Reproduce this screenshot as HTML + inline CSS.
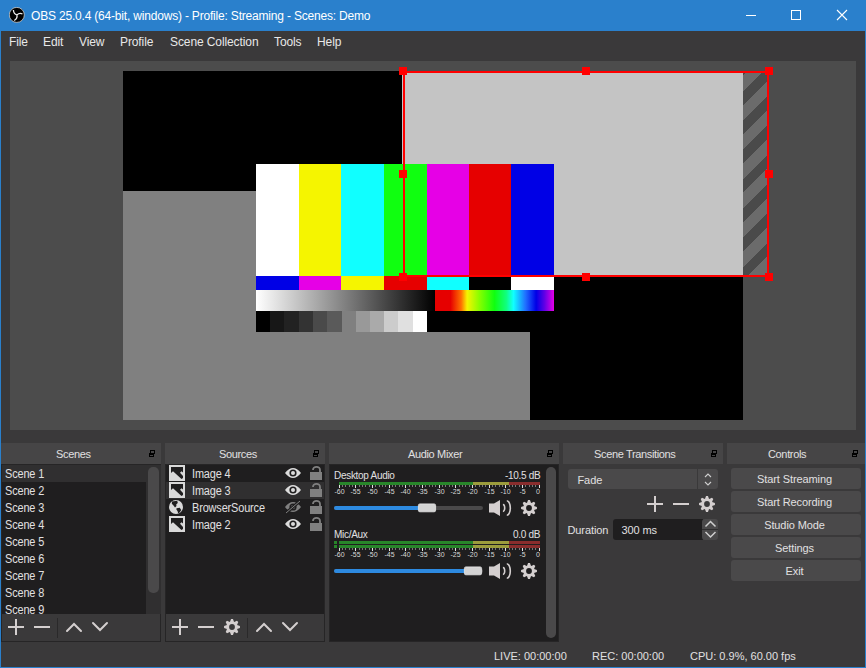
<!DOCTYPE html><html><head><meta charset="utf-8"><style>
*{margin:0;padding:0;box-sizing:border-box}
html,body{width:866px;height:668px;overflow:hidden}
body{background:#3a393a;font-family:"Liberation Sans",sans-serif;color:#e1e0e1;position:relative}
.a{position:absolute}
.t{position:absolute;white-space:nowrap;line-height:1}
.menu{font-size:12px;letter-spacing:-0.1px;color:#e8e8e8}
.dt{top:443px;height:21px;background:#464546}
.dtt{top:449px;font-size:11px;letter-spacing:-0.35px}
.lst{background:#1f1e1f}
.it{font-size:12px;letter-spacing:-0.15px;transform:scaleX(0.91);transform-origin:0 0}
.am{font-size:10px;letter-spacing:-0.3px}
.bt{font-size:11px;letter-spacing:-0.1px}
.btn{position:absolute;left:731px;width:130px;height:21px;background:#4a494a;border-radius:3px;font-size:11px;letter-spacing:-0.1px;text-align:center;line-height:21px;padding-right:3px;padding-top:1px}
.sl{font-size:11px;letter-spacing:0px;top:652px}
</style></head><body>
<div class="a" style="left:0px;top:0px;width:866px;height:31px;background:#2a80cc;"></div>
<div class="a" style="left:0px;top:0px;width:1px;height:668px;background:#2a80cc;"></div>
<div class="a" style="left:865px;top:0px;width:1px;height:668px;background:#2a80cc;"></div>
<div class="a" style="left:0px;top:667px;width:866px;height:1px;background:#2a80cc;"></div>
<div class="t " style="left:31px;top:10px;font-size:12px;letter-spacing:-0.19px;color:#fff">OBS 25.0.4 (64-bit, windows) - Profile: Streaming - Scenes: Demo</div>
<svg class="a" style="left:9px;top:7px" width="16" height="16" viewBox="0 0 16 16">
<circle cx="7.8" cy="7.9" r="7.5" fill="#000" stroke="#e8e0d8" stroke-width="0.7"/>
<path d="M7.9,7.9 Q4.8,7.2 4.4,3 M7.9,7.9 Q10.5,5.5 13.5,7 M7.9,7.9 Q8.8,11.5 5.2,13.5" stroke="#eee" stroke-width="1.3" fill="none"/>
</svg>
<div class="a" style="left:746px;top:15px;width:10px;height:1px;background:#fff;"></div>
<div class="a" style="left:791px;top:10px;width:10px;height:10px;background:transparent;border:1px solid #fff"></div>
<svg class="a" style="left:836px;top:9px" width="12" height="12" viewBox="0 0 12 12"><path d="M1 1L11 11M11 1L1 11" stroke="#fff" stroke-width="1.1"/></svg>
<div class="t menu" style="left:9px;top:36px;">File</div>
<div class="t menu" style="left:43px;top:36px;">Edit</div>
<div class="t menu" style="left:79px;top:36px;">View</div>
<div class="t menu" style="left:120px;top:36px;">Profile</div>
<div class="t menu" style="left:170px;top:36px;">Scene Collection</div>
<div class="t menu" style="left:274px;top:36px;">Tools</div>
<div class="t menu" style="left:317px;top:36px;">Help</div>
<div class="a" style="left:10px;top:61px;width:846px;height:369px;background:#4c4c4c;"></div>
<div class="a" style="left:123px;top:71px;width:620px;height:349px;background:#000;"></div>
<div class="a" style="left:123px;top:191px;width:407px;height:229px;background:#808080;"></div>
<div class="a" style="left:402px;top:71px;width:341px;height:205px;background:#c4c4c4;"></div>
<div class="a" style="left:743px;top:73px;width:24px;height:202px;background:repeating-linear-gradient(135deg,#4a4a4a 0 2px,#6b6b6b 2px 13px,#4a4a4a 13px 20.7px);"></div>
<div class="a" style="left:256px;top:164px;width:298px;height:168px;background:#000;"></div>
<div class="a" style="left:256px;top:164px;width:298px;height:112px;background:linear-gradient(90deg,#fff 0px 43px,#f5f500 43px 85px,#10ffff 85px 128px,#10ff10 128px 171px,#e600e6 171px 213px,#e60000 213px 255px,#0000e6 255px 298px);"></div>
<div class="a" style="left:256px;top:276px;width:298px;height:14px;background:linear-gradient(90deg,#0000e6 0px 43px,#e600e6 43px 85px,#f5f500 85px 128px,#e60000 128px 171px,#10ffff 171px 213px,#000 213px 255px,#fff 255px 298px);"></div>
<div class="a" style="left:256px;top:290px;width:179px;height:21px;background:linear-gradient(90deg,#fff,#000);"></div>
<div class="a" style="left:435px;top:290px;width:119px;height:21px;background:linear-gradient(90deg,#e60000 0%,#e60000 13%,#ff7000 22%,#f5f500 27%,#80ff00 38%,#10ff10 50%,#10ff80 60%,#10ffff 66%,#2070ff 76%,#0000e6 85%,#6000e6 92%,#e600e6 100%);"></div>
<div class="a" style="left:256px;top:311px;width:171px;height:21px;background:linear-gradient(90deg,#000 0px 14px,#171717 14px 28px,#222 28px 43px,#333 43px 57px,#4a4a4a 57px 71px,#5a5a5a 71px 86px,#808080 86px 100px,#999 100px 114px,#aaa 114px 128px,#ccc 128px 142px,#e0e0e0 142px 157px,#fff 157px 171px);"></div>
<div class="a" style="left:403px;top:71px;width:366px;height:2px;background:#f00;"></div>
<div class="a" style="left:403px;top:275px;width:366px;height:2px;background:#f00;"></div>
<div class="a" style="left:403px;top:71px;width:2px;height:206px;background:#f00;"></div>
<div class="a" style="left:767px;top:71px;width:2px;height:206px;background:#f00;"></div>
<div class="a" style="left:399px;top:67px;width:8px;height:8px;background:#f00;"></div>
<div class="a" style="left:399px;top:170px;width:8px;height:8px;background:#f00;"></div>
<div class="a" style="left:399px;top:273px;width:8px;height:8px;background:#f00;"></div>
<div class="a" style="left:582px;top:67px;width:8px;height:8px;background:#f00;"></div>
<div class="a" style="left:582px;top:273px;width:8px;height:8px;background:#f00;"></div>
<div class="a" style="left:765px;top:67px;width:8px;height:8px;background:#f00;"></div>
<div class="a" style="left:765px;top:170px;width:8px;height:8px;background:#f00;"></div>
<div class="a" style="left:765px;top:273px;width:8px;height:8px;background:#f00;"></div>
<div class="a dt" style="left:1px;width:160px"></div>
<div class="a dt" style="left:165px;width:160px"></div>
<div class="a dt" style="left:329px;width:230px"></div>
<div class="a dt" style="left:563px;width:160px"></div>
<div class="a dt" style="left:727px;width:138px"></div>
<div class="t dtt" style="left:56px;top:449px;">Scenes</div>
<div class="t dtt" style="left:219px;top:449px;">Sources</div>
<div class="t dtt" style="left:408px;top:449px;">Audio Mixer</div>
<div class="t dtt" style="left:594px;top:449px;">Scene Transitions</div>
<div class="t dtt" style="left:768px;top:449px;">Controls</div>
<div class="a" style="left:1px;top:464px;width:160px;height:178px;background:#262526;"></div>
<div class="a" style="left:2px;top:465px;width:144px;height:149px;background:#1f1e1f;"></div>
<div class="a" style="left:2px;top:465px;width:144px;height:17px;background:#302f30;"></div>
<div class="t it" style="left:5px;top:468px;">Scene 1</div>
<div class="t it" style="left:5px;top:485px;">Scene 2</div>
<div class="t it" style="left:5px;top:502px;">Scene 3</div>
<div class="t it" style="left:5px;top:519px;">Scene 4</div>
<div class="t it" style="left:5px;top:536px;">Scene 5</div>
<div class="t it" style="left:5px;top:553px;">Scene 6</div>
<div class="t it" style="left:5px;top:570px;">Scene 7</div>
<div class="t it" style="left:5px;top:587px;">Scene 8</div>
<div class="t it" style="left:5px;top:604px;">Scene 9</div>
<div class="a" style="left:146px;top:465px;width:15px;height:149px;background:#302f30;"></div>
<div class="a" style="left:148px;top:467px;width:11px;height:126px;background:#4a494a;border-radius:5px"></div>
<div class="a" style="left:2px;top:614px;width:158px;height:27px;background:#3a393a;"></div>
<div class="a" style="left:57px;top:618px;width:1px;height:20px;background:#2a292a;"></div>
<div class="a" style="left:165px;top:464px;width:160px;height:178px;background:#262526;"></div>
<div class="a" style="left:166px;top:465px;width:158px;height:149px;background:#1f1e1f;"></div>
<div class="a" style="left:166px;top:482px;width:158px;height:17px;background:#302f30;"></div>
<div class="a" style="left:166px;top:614px;width:158px;height:27px;background:#3a393a;"></div>
<div class="a" style="left:247px;top:618px;width:1px;height:20px;background:#2a292a;"></div>
<div class="t it" style="left:192px;top:468px;">Image 4</div>
<div class="t it" style="left:192px;top:485px;">Image 3</div>
<div class="t it" style="left:192px;top:502px;">BrowserSource</div>
<div class="t it" style="left:192px;top:519px;">Image 2</div>
<div class="a" style="left:329px;top:464px;width:230px;height:178px;background:#262526;"></div>
<div class="a" style="left:330px;top:465px;width:228px;height:176px;background:#1f1e1f;"></div>
<div class="a" style="left:546px;top:467px;width:10px;height:171px;background:#4a494a;border-radius:5px"></div>
<div class="t am" style="left:334px;top:471px;">Desktop Audio</div>
<div class="t am" style="left:505px;top:471px;">-10.5 dB</div>
<div class="t am" style="left:334px;top:530px;">Mic/Aux</div>
<div class="t am" style="left:513px;top:530px;">0.0 dB</div>
<div class="a" style="left:568px;top:469px;width:150px;height:20px;background:#4a494a;border-radius:3px"></div>
<div class="a" style="left:697px;top:469px;width:1px;height:20px;background:#3a393a;"></div>
<div class="t bt" style="left:577.5px;top:475px;">Fade</div>
<div class="t bt" style="left:567.5px;top:525px;">Duration</div>
<div class="a" style="left:613px;top:519px;width:90px;height:21px;background:#1f1e1f;border-radius:3px 0 0 3px"></div>
<div class="a" style="left:702px;top:519px;width:16px;height:21px;background:#4a494a;border-radius:3px"></div>
<div class="a" style="left:702px;top:529px;width:16px;height:1px;background:#2f2e2f;"></div>
<div class="t bt" style="left:621.5px;top:525px;">300 ms</div>
<div class="btn" style="top:468px">Start Streaming</div>
<div class="btn" style="top:491px">Start Recording</div>
<div class="btn" style="top:514px">Studio Mode</div>
<div class="btn" style="top:537px">Settings</div>
<div class="btn" style="top:560px">Exit</div>
<div class="t sl" style="left:494px;top:651px;">LIVE: 00:00:00</div>
<div class="t sl" style="left:592px;top:651px;">REC: 00:00:00</div>
<div class="t sl" style="left:690px;top:651px;">CPU: 0.9%, 60.00 fps</div>
<svg class="a" style="left:0;top:0" width="866" height="668" viewBox="0 0 866 668"><path d="M16 619v16M8 627h16" stroke="#d4cfcf" stroke-width="2"/><path d="M34 627h16" stroke="#d4cfcf" stroke-width="2"/><path d="M67 631l7-7 7 7" stroke="#d4cfcf" stroke-width="2" fill="none" stroke-linecap="round"/><path d="M93 623l7 7 7-7" stroke="#d4cfcf" stroke-width="2" fill="none" stroke-linecap="round"/><path d="M180 619v16M172 627h16" stroke="#d4cfcf" stroke-width="2"/><path d="M198 627h16" stroke="#d4cfcf" stroke-width="2"/><path d="M237.09,624.91 L237.73,625.23 L239.94,626.04 L239.94,627.96 L237.73,628.77 L237.08,629.12 L237.31,629.80 L238.29,631.94 L236.94,633.29 L234.80,632.31 L234.09,632.09 L233.77,632.73 L232.96,634.94 L231.04,634.94 L230.23,632.73 L229.88,632.08 L229.20,632.31 L227.06,633.29 L225.71,631.94 L226.69,629.80 L226.91,629.09 L226.27,628.77 L224.06,627.96 L224.06,626.04 L226.27,625.23 L226.92,624.88 L226.69,624.20 L225.71,622.06 L227.06,620.71 L229.20,621.69 L229.91,621.91 L230.23,621.27 L231.04,619.06 L232.96,619.06 L233.77,621.27 L234.12,621.92 L234.80,621.69 L236.94,620.71 L238.29,622.06 L237.31,624.20ZM234.9,627 A2.9,2.9 0 1 0 229.1,627 A2.9,2.9 0 1 0 234.9,627Z" fill="#d4cfcf" fill-rule="evenodd"/><path d="M257 631l7-7 7 7" stroke="#d4cfcf" stroke-width="2" fill="none" stroke-linecap="round"/><path d="M283 623l7 7 7-7" stroke="#d4cfcf" stroke-width="2" fill="none" stroke-linecap="round"/><path d="M655 496v16M647 504h16" stroke="#d4cfcf" stroke-width="2"/><path d="M673 504h16" stroke="#d4cfcf" stroke-width="2"/><path d="M712.09,501.91 L712.73,502.23 L714.94,503.04 L714.94,504.96 L712.73,505.77 L712.08,506.12 L712.31,506.80 L713.29,508.94 L711.94,510.29 L709.80,509.31 L709.09,509.09 L708.77,509.73 L707.96,511.94 L706.04,511.94 L705.23,509.73 L704.88,509.08 L704.20,509.31 L702.06,510.29 L700.71,508.94 L701.69,506.80 L701.91,506.09 L701.27,505.77 L699.06,504.96 L699.06,503.04 L701.27,502.23 L701.92,501.88 L701.69,501.20 L700.71,499.06 L702.06,497.71 L704.20,498.69 L704.91,498.91 L705.23,498.27 L706.04,496.06 L707.96,496.06 L708.77,498.27 L709.12,498.92 L709.80,498.69 L711.94,497.71 L713.29,499.06 L712.31,501.20ZM709.9,504 A2.9,2.9 0 1 0 704.1,504 A2.9,2.9 0 1 0 709.9,504Z" fill="#d4cfcf" fill-rule="evenodd"/><rect x="169" y="465" width="16" height="16" fill="#d9d9d9"/><path d="M171,467H183V472.5L181.5,471.3L180,472.8L183,476V478L181.5,479L173,471.3L171,473Z" fill="#1f1e1f"/><path d="M285,473 Q293,463 301,473 Q293,483 285,473Z" fill="#dcdcdc"/><circle cx="293" cy="473" r="3.6" fill="#1f1e1f"/><circle cx="293" cy="473" r="2" fill="#dcdcdc"/><rect x="310" y="472" width="12" height="8" fill="#808080"/><path d="M313,470 A3.5,3.2 0 0 1 320,470 V472.5" stroke="#808080" stroke-width="1.8" fill="none"/><rect x="169" y="482" width="16" height="16" fill="#d9d9d9"/><path d="M171,484H183V489.5L181.5,488.3L180,489.8L183,493V495L181.5,496L173,488.3L171,490Z" fill="#1f1e1f"/><path d="M285,490 Q293,480 301,490 Q293,500 285,490Z" fill="#dcdcdc"/><circle cx="293" cy="490" r="3.6" fill="#1f1e1f"/><circle cx="293" cy="490" r="2" fill="#dcdcdc"/><rect x="310" y="489" width="12" height="8" fill="#808080"/><path d="M313,487 A3.5,3.2 0 0 1 320,487 V489.5" stroke="#808080" stroke-width="1.8" fill="none"/><circle cx="176" cy="507" r="7" fill="#d9d9d9"/><path d="M172,501.5 L177.2,500.8 L177.8,503 L176.2,504.5 L176.5,506 L175,507.5 L173.5,505.5 L171.8,503.8 Z" fill="#1f1e1f"/><path d="M176.5,508.3 L179.8,507.8 L181.2,510 L179.8,512.2 L178.2,513.6 L177.6,511.2 L176.4,509.6 Z" fill="#1f1e1f"/><path d="M285,507 Q293,497 301,507 Q293,517 285,507Z" fill="#808080"/><circle cx="293" cy="507" r="3.6" fill="#1f1e1f"/><circle cx="293" cy="507" r="2" fill="#808080"/><path d="M286,513 L300,501" stroke="#1f1e1f" stroke-width="3"/><path d="M286,513 L300,501" stroke="#808080" stroke-width="1"/><rect x="310" y="506" width="12" height="8" fill="#808080"/><path d="M313,504 A3.5,3.2 0 0 1 320,504 V506.5" stroke="#808080" stroke-width="1.8" fill="none"/><rect x="169" y="516" width="16" height="16" fill="#d9d9d9"/><path d="M171,518H183V523.5L181.5,522.3L180,523.8L183,527V529L181.5,530L173,522.3L171,524Z" fill="#1f1e1f"/><path d="M285,524 Q293,514 301,524 Q293,534 285,524Z" fill="#dcdcdc"/><circle cx="293" cy="524" r="3.6" fill="#1f1e1f"/><circle cx="293" cy="524" r="2" fill="#dcdcdc"/><rect x="310" y="523" width="12" height="8" fill="#808080"/><path d="M313,521 A3.5,3.2 0 0 1 320,521 V523.5" stroke="#808080" stroke-width="1.8" fill="none"/><rect x="339" y="482" width="134" height="3" fill="#28862a"/><rect x="473" y="482" width="36" height="3" fill="#9c9c3c"/><rect x="509" y="482" width="31" height="3" fill="#8a2d2d"/><rect x="339" y="485" width="1" height="3" fill="#e1e0e1"/><rect x="342" y="485" width="1" height="2" fill="#7a797a"/><rect x="345" y="485" width="1" height="2" fill="#7a797a"/><rect x="349" y="485" width="1" height="2" fill="#7a797a"/><rect x="352" y="485" width="1" height="2" fill="#7a797a"/><rect x="355" y="485" width="1" height="3" fill="#e1e0e1"/><rect x="359" y="485" width="1" height="2" fill="#7a797a"/><rect x="362" y="485" width="1" height="2" fill="#7a797a"/><rect x="365" y="485" width="1" height="2" fill="#7a797a"/><rect x="369" y="485" width="1" height="2" fill="#7a797a"/><rect x="372" y="485" width="1" height="3" fill="#e1e0e1"/><rect x="375" y="485" width="1" height="2" fill="#7a797a"/><rect x="379" y="485" width="1" height="2" fill="#7a797a"/><rect x="382" y="485" width="1" height="2" fill="#7a797a"/><rect x="385" y="485" width="1" height="2" fill="#7a797a"/><rect x="389" y="485" width="1" height="3" fill="#e1e0e1"/><rect x="392" y="485" width="1" height="2" fill="#7a797a"/><rect x="395" y="485" width="1" height="2" fill="#7a797a"/><rect x="399" y="485" width="1" height="2" fill="#7a797a"/><rect x="402" y="485" width="1" height="2" fill="#7a797a"/><rect x="405" y="485" width="1" height="3" fill="#e1e0e1"/><rect x="409" y="485" width="1" height="2" fill="#7a797a"/><rect x="412" y="485" width="1" height="2" fill="#7a797a"/><rect x="415" y="485" width="1" height="2" fill="#7a797a"/><rect x="419" y="485" width="1" height="2" fill="#7a797a"/><rect x="422" y="485" width="1" height="3" fill="#e1e0e1"/><rect x="425" y="485" width="1" height="2" fill="#7a797a"/><rect x="429" y="485" width="1" height="2" fill="#7a797a"/><rect x="432" y="485" width="1" height="2" fill="#7a797a"/><rect x="435" y="485" width="1" height="2" fill="#7a797a"/><rect x="439" y="485" width="1" height="3" fill="#e1e0e1"/><rect x="442" y="485" width="1" height="2" fill="#7a797a"/><rect x="445" y="485" width="1" height="2" fill="#7a797a"/><rect x="449" y="485" width="1" height="2" fill="#7a797a"/><rect x="452" y="485" width="1" height="2" fill="#7a797a"/><rect x="455" y="485" width="1" height="3" fill="#e1e0e1"/><rect x="459" y="485" width="1" height="2" fill="#7a797a"/><rect x="462" y="485" width="1" height="2" fill="#7a797a"/><rect x="465" y="485" width="1" height="2" fill="#7a797a"/><rect x="469" y="485" width="1" height="2" fill="#7a797a"/><rect x="472" y="485" width="1" height="3" fill="#e1e0e1"/><rect x="475" y="485" width="1" height="2" fill="#7a797a"/><rect x="479" y="485" width="1" height="2" fill="#7a797a"/><rect x="482" y="485" width="1" height="2" fill="#7a797a"/><rect x="485" y="485" width="1" height="2" fill="#7a797a"/><rect x="489" y="485" width="1" height="3" fill="#e1e0e1"/><rect x="492" y="485" width="1" height="2" fill="#7a797a"/><rect x="495" y="485" width="1" height="2" fill="#7a797a"/><rect x="499" y="485" width="1" height="2" fill="#7a797a"/><rect x="502" y="485" width="1" height="2" fill="#7a797a"/><rect x="505" y="485" width="1" height="3" fill="#e1e0e1"/><rect x="509" y="485" width="1" height="2" fill="#7a797a"/><rect x="512" y="485" width="1" height="2" fill="#7a797a"/><rect x="515" y="485" width="1" height="2" fill="#7a797a"/><rect x="519" y="485" width="1" height="2" fill="#7a797a"/><rect x="522" y="485" width="1" height="3" fill="#e1e0e1"/><rect x="525" y="485" width="1" height="2" fill="#7a797a"/><rect x="529" y="485" width="1" height="2" fill="#7a797a"/><rect x="532" y="485" width="1" height="2" fill="#7a797a"/><rect x="535" y="485" width="1" height="2" fill="#7a797a"/><rect x="539" y="485" width="1" height="3" fill="#e1e0e1"/><text x="339.5" y="494" font-size="7" fill="#d8d8d8" text-anchor="middle" font-family="Liberation Sans">-60</text><text x="355.5" y="494" font-size="7" fill="#d8d8d8" text-anchor="middle" font-family="Liberation Sans">-55</text><text x="372.5" y="494" font-size="7" fill="#d8d8d8" text-anchor="middle" font-family="Liberation Sans">-50</text><text x="389.5" y="494" font-size="7" fill="#d8d8d8" text-anchor="middle" font-family="Liberation Sans">-45</text><text x="405.5" y="494" font-size="7" fill="#d8d8d8" text-anchor="middle" font-family="Liberation Sans">-40</text><text x="422.5" y="494" font-size="7" fill="#d8d8d8" text-anchor="middle" font-family="Liberation Sans">-35</text><text x="439.5" y="494" font-size="7" fill="#d8d8d8" text-anchor="middle" font-family="Liberation Sans">-30</text><text x="455.5" y="494" font-size="7" fill="#d8d8d8" text-anchor="middle" font-family="Liberation Sans">-25</text><text x="472.5" y="494" font-size="7" fill="#d8d8d8" text-anchor="middle" font-family="Liberation Sans">-20</text><text x="489.5" y="494" font-size="7" fill="#d8d8d8" text-anchor="middle" font-family="Liberation Sans">-15</text><text x="505.5" y="494" font-size="7" fill="#d8d8d8" text-anchor="middle" font-family="Liberation Sans">-10</text><text x="522.5" y="494" font-size="7" fill="#d8d8d8" text-anchor="middle" font-family="Liberation Sans">-5</text><text x="540.0" y="494" font-size="7" fill="#d8d8d8" text-anchor="end" font-family="Liberation Sans">0</text><rect x="339" y="541" width="134" height="3" fill="#28862a"/><rect x="473" y="541" width="36" height="3" fill="#9c9c3c"/><rect x="509" y="541" width="31" height="3" fill="#8a2d2d"/><rect x="334" y="541" width="3" height="3" fill="#28862a"/><rect x="339" y="545" width="134" height="3" fill="#28862a"/><rect x="473" y="545" width="36" height="3" fill="#9c9c3c"/><rect x="509" y="545" width="31" height="3" fill="#8a2d2d"/><rect x="334" y="545" width="3" height="3" fill="#28862a"/><rect x="339" y="548" width="1" height="3" fill="#e1e0e1"/><rect x="342" y="548" width="1" height="2" fill="#7a797a"/><rect x="345" y="548" width="1" height="2" fill="#7a797a"/><rect x="349" y="548" width="1" height="2" fill="#7a797a"/><rect x="352" y="548" width="1" height="2" fill="#7a797a"/><rect x="355" y="548" width="1" height="3" fill="#e1e0e1"/><rect x="359" y="548" width="1" height="2" fill="#7a797a"/><rect x="362" y="548" width="1" height="2" fill="#7a797a"/><rect x="365" y="548" width="1" height="2" fill="#7a797a"/><rect x="369" y="548" width="1" height="2" fill="#7a797a"/><rect x="372" y="548" width="1" height="3" fill="#e1e0e1"/><rect x="375" y="548" width="1" height="2" fill="#7a797a"/><rect x="379" y="548" width="1" height="2" fill="#7a797a"/><rect x="382" y="548" width="1" height="2" fill="#7a797a"/><rect x="385" y="548" width="1" height="2" fill="#7a797a"/><rect x="389" y="548" width="1" height="3" fill="#e1e0e1"/><rect x="392" y="548" width="1" height="2" fill="#7a797a"/><rect x="395" y="548" width="1" height="2" fill="#7a797a"/><rect x="399" y="548" width="1" height="2" fill="#7a797a"/><rect x="402" y="548" width="1" height="2" fill="#7a797a"/><rect x="405" y="548" width="1" height="3" fill="#e1e0e1"/><rect x="409" y="548" width="1" height="2" fill="#7a797a"/><rect x="412" y="548" width="1" height="2" fill="#7a797a"/><rect x="415" y="548" width="1" height="2" fill="#7a797a"/><rect x="419" y="548" width="1" height="2" fill="#7a797a"/><rect x="422" y="548" width="1" height="3" fill="#e1e0e1"/><rect x="425" y="548" width="1" height="2" fill="#7a797a"/><rect x="429" y="548" width="1" height="2" fill="#7a797a"/><rect x="432" y="548" width="1" height="2" fill="#7a797a"/><rect x="435" y="548" width="1" height="2" fill="#7a797a"/><rect x="439" y="548" width="1" height="3" fill="#e1e0e1"/><rect x="442" y="548" width="1" height="2" fill="#7a797a"/><rect x="445" y="548" width="1" height="2" fill="#7a797a"/><rect x="449" y="548" width="1" height="2" fill="#7a797a"/><rect x="452" y="548" width="1" height="2" fill="#7a797a"/><rect x="455" y="548" width="1" height="3" fill="#e1e0e1"/><rect x="459" y="548" width="1" height="2" fill="#7a797a"/><rect x="462" y="548" width="1" height="2" fill="#7a797a"/><rect x="465" y="548" width="1" height="2" fill="#7a797a"/><rect x="469" y="548" width="1" height="2" fill="#7a797a"/><rect x="472" y="548" width="1" height="3" fill="#e1e0e1"/><rect x="475" y="548" width="1" height="2" fill="#7a797a"/><rect x="479" y="548" width="1" height="2" fill="#7a797a"/><rect x="482" y="548" width="1" height="2" fill="#7a797a"/><rect x="485" y="548" width="1" height="2" fill="#7a797a"/><rect x="489" y="548" width="1" height="3" fill="#e1e0e1"/><rect x="492" y="548" width="1" height="2" fill="#7a797a"/><rect x="495" y="548" width="1" height="2" fill="#7a797a"/><rect x="499" y="548" width="1" height="2" fill="#7a797a"/><rect x="502" y="548" width="1" height="2" fill="#7a797a"/><rect x="505" y="548" width="1" height="3" fill="#e1e0e1"/><rect x="509" y="548" width="1" height="2" fill="#7a797a"/><rect x="512" y="548" width="1" height="2" fill="#7a797a"/><rect x="515" y="548" width="1" height="2" fill="#7a797a"/><rect x="519" y="548" width="1" height="2" fill="#7a797a"/><rect x="522" y="548" width="1" height="3" fill="#e1e0e1"/><rect x="525" y="548" width="1" height="2" fill="#7a797a"/><rect x="529" y="548" width="1" height="2" fill="#7a797a"/><rect x="532" y="548" width="1" height="2" fill="#7a797a"/><rect x="535" y="548" width="1" height="2" fill="#7a797a"/><rect x="539" y="548" width="1" height="3" fill="#e1e0e1"/><text x="339.5" y="557" font-size="7" fill="#d8d8d8" text-anchor="middle" font-family="Liberation Sans">-60</text><text x="355.5" y="557" font-size="7" fill="#d8d8d8" text-anchor="middle" font-family="Liberation Sans">-55</text><text x="372.5" y="557" font-size="7" fill="#d8d8d8" text-anchor="middle" font-family="Liberation Sans">-50</text><text x="389.5" y="557" font-size="7" fill="#d8d8d8" text-anchor="middle" font-family="Liberation Sans">-45</text><text x="405.5" y="557" font-size="7" fill="#d8d8d8" text-anchor="middle" font-family="Liberation Sans">-40</text><text x="422.5" y="557" font-size="7" fill="#d8d8d8" text-anchor="middle" font-family="Liberation Sans">-35</text><text x="439.5" y="557" font-size="7" fill="#d8d8d8" text-anchor="middle" font-family="Liberation Sans">-30</text><text x="455.5" y="557" font-size="7" fill="#d8d8d8" text-anchor="middle" font-family="Liberation Sans">-25</text><text x="472.5" y="557" font-size="7" fill="#d8d8d8" text-anchor="middle" font-family="Liberation Sans">-20</text><text x="489.5" y="557" font-size="7" fill="#d8d8d8" text-anchor="middle" font-family="Liberation Sans">-15</text><text x="505.5" y="557" font-size="7" fill="#d8d8d8" text-anchor="middle" font-family="Liberation Sans">-10</text><text x="522.5" y="557" font-size="7" fill="#d8d8d8" text-anchor="middle" font-family="Liberation Sans">-5</text><text x="540.0" y="557" font-size="7" fill="#d8d8d8" text-anchor="end" font-family="Liberation Sans">0</text><rect x="334" y="506" width="149" height="4" rx="2" fill="#4a494a"/><rect x="334" y="506" width="88" height="4" rx="2" fill="#2d8ae0"/><rect x="418.4" y="503.9" width="17.2" height="7.9" rx="1.5" fill="#d3d3d3" stroke="#e8e8e8" stroke-width="0.8"/><rect x="334" y="569" width="149" height="4" rx="2" fill="#4a494a"/><rect x="334" y="569" width="134" height="4" rx="2" fill="#2d8ae0"/><rect x="464.4" y="566.9" width="17.2" height="7.9" rx="1.5" fill="#d3d3d3" stroke="#e8e8e8" stroke-width="0.8"/><path d="M489,503.5H494L500,500V516L494,512.5H489Z" fill="#d4cfcf"/><path d="M502.9,504.5 A1.8,3.5 0 0 1 502.9,511.5" stroke="#d4cfcf" stroke-width="1.6" fill="none"/><path d="M506.8,500.8 A3.5,7.2 0 0 1 506.8,515.2" stroke="#d4cfcf" stroke-width="1.6" fill="none"/><path d="M534.09,505.91 L534.73,506.23 L536.94,507.04 L536.94,508.96 L534.73,509.77 L534.08,510.12 L534.31,510.80 L535.29,512.94 L533.94,514.29 L531.80,513.31 L531.09,513.09 L530.77,513.73 L529.96,515.94 L528.04,515.94 L527.23,513.73 L526.88,513.08 L526.20,513.31 L524.06,514.29 L522.71,512.94 L523.69,510.80 L523.91,510.09 L523.27,509.77 L521.06,508.96 L521.06,507.04 L523.27,506.23 L523.92,505.88 L523.69,505.20 L522.71,503.06 L524.06,501.71 L526.20,502.69 L526.91,502.91 L527.23,502.27 L528.04,500.06 L529.96,500.06 L530.77,502.27 L531.12,502.92 L531.80,502.69 L533.94,501.71 L535.29,503.06 L534.31,505.20ZM531.9,508 A2.9,2.9 0 1 0 526.1,508 A2.9,2.9 0 1 0 531.9,508Z" fill="#d4cfcf" fill-rule="evenodd"/><path d="M489,566.5H494L500,563V579L494,575.5H489Z" fill="#d4cfcf"/><path d="M502.9,567.5 A1.8,3.5 0 0 1 502.9,574.5" stroke="#d4cfcf" stroke-width="1.6" fill="none"/><path d="M506.8,563.8 A3.5,7.2 0 0 1 506.8,578.2" stroke="#d4cfcf" stroke-width="1.6" fill="none"/><path d="M534.09,568.91 L534.73,569.23 L536.94,570.04 L536.94,571.96 L534.73,572.77 L534.08,573.12 L534.31,573.80 L535.29,575.94 L533.94,577.29 L531.80,576.31 L531.09,576.09 L530.77,576.73 L529.96,578.94 L528.04,578.94 L527.23,576.73 L526.88,576.08 L526.20,576.31 L524.06,577.29 L522.71,575.94 L523.69,573.80 L523.91,573.09 L523.27,572.77 L521.06,571.96 L521.06,570.04 L523.27,569.23 L523.92,568.88 L523.69,568.20 L522.71,566.06 L524.06,564.71 L526.20,565.69 L526.91,565.91 L527.23,565.27 L528.04,563.06 L529.96,563.06 L530.77,565.27 L531.12,565.92 L531.80,565.69 L533.94,564.71 L535.29,566.06 L534.31,568.20ZM531.9,571 A2.9,2.9 0 1 0 526.1,571 A2.9,2.9 0 1 0 531.9,571Z" fill="#d4cfcf" fill-rule="evenodd"/><path d="M705,477 L708,474 L711,477 M705,482 L708,485 L711,482" stroke="#cfcfcf" stroke-width="1.1" fill="none"/><path d="M705.5,526.5 L710.5,521.5 L715.5,526.5 M705.5,532 L710.5,537 L715.5,532" stroke="#cfcfcf" stroke-width="1.5" fill="none"/></svg>
<svg class="a" style="left:149px;top:450px" width="7" height="7" viewBox="0 0 7 7" shape-rendering="crispEdges"><path d="M1,0H6V4H5V1H2V3H1Z" fill="#000"/><path d="M0,3H5V7H0Z M1,5H4V6H1Z" fill="#000" fill-rule="evenodd"/></svg>
<svg class="a" style="left:313px;top:450px" width="7" height="7" viewBox="0 0 7 7" shape-rendering="crispEdges"><path d="M1,0H6V4H5V1H2V3H1Z" fill="#000"/><path d="M0,3H5V7H0Z M1,5H4V6H1Z" fill="#000" fill-rule="evenodd"/></svg>
<svg class="a" style="left:547px;top:450px" width="7" height="7" viewBox="0 0 7 7" shape-rendering="crispEdges"><path d="M1,0H6V4H5V1H2V3H1Z" fill="#000"/><path d="M0,3H5V7H0Z M1,5H4V6H1Z" fill="#000" fill-rule="evenodd"/></svg>
<svg class="a" style="left:711px;top:450px" width="7" height="7" viewBox="0 0 7 7" shape-rendering="crispEdges"><path d="M1,0H6V4H5V1H2V3H1Z" fill="#000"/><path d="M0,3H5V7H0Z M1,5H4V6H1Z" fill="#000" fill-rule="evenodd"/></svg>
<svg class="a" style="left:852px;top:450px" width="7" height="7" viewBox="0 0 7 7" shape-rendering="crispEdges"><path d="M1,0H6V4H5V1H2V3H1Z" fill="#000"/><path d="M0,3H5V7H0Z M1,5H4V6H1Z" fill="#000" fill-rule="evenodd"/></svg>
</body></html>
